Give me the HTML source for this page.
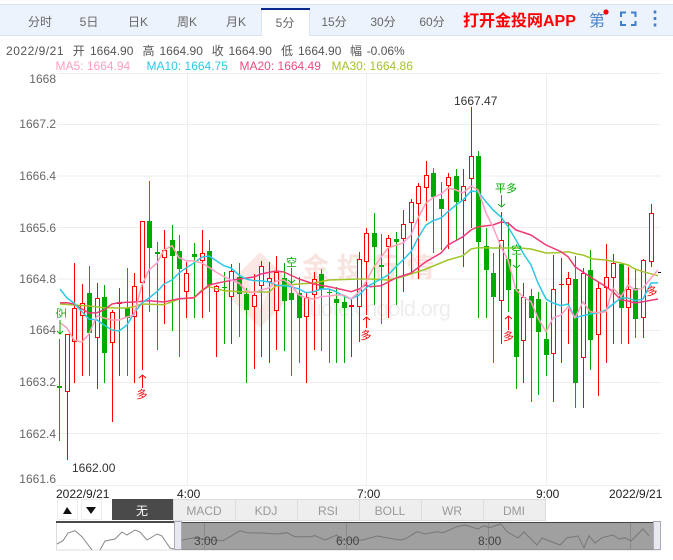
<!DOCTYPE html>
<html><head><meta charset="utf-8"><style>
html,body{margin:0;padding:0;background:#fff;width:673px;height:560px;overflow:hidden}
svg{display:block;font-family:"Liberation Sans","Noto Sans CJK SC",sans-serif}
</style></head><body>
<svg width="673" height="560" viewBox="0 0 673 560" xmlns="http://www.w3.org/2000/svg">
<!-- top bar -->
<rect x="0" y="4" width="673" height="32" fill="#edf3fc"/>
<path d="M0 4.5H673M0 35.5H673" stroke="#dbe4f3" fill="none"/>
<path d="M261.5 36V9H309.5V36" fill="#fff" stroke="#dbe4f3"/>
<rect x="261" y="8" width="49" height="2" fill="#0a2a8c"/>
<rect x="262" y="34" width="47" height="3" fill="#fff"/>
<g font-size="12" fill="#666" text-anchor="middle">
<text x="40" y="26">分时</text><text x="89" y="26">5日</text><text x="138" y="26">日K</text><text x="187" y="26">周K</text><text x="236" y="26">月K</text><text x="285" y="27">5分</text><text x="334" y="26">15分</text><text x="383" y="26">30分</text><text x="432" y="26">60分</text>
</g>
<text x="463" y="26" font-size="16" font-weight="bold" fill="#f00">打开金投网APP</text>
<text x="589" y="26" font-size="16" fill="#4a84cc">第</text>
<circle cx="606" cy="12" r="2.6" fill="#f00"/>
<path d="M626 12.500H621V17M631 12.500H635.500V17M621 21V25H626M635.500 21V25H631" fill="none" stroke="#3f7fcf" stroke-width="2"/>
<path d="M655 10.500V13.500M655 17V20M655 23.500V26.500" stroke="#3f7fcf" stroke-width="2.600" fill="none"/>
<!-- info rows -->
<g font-size="12" fill="#555">
<text x="6" y="55" textLength="57.500" lengthAdjust="spacing">2022/9/21</text>
<text x="72.700" y="55">开</text><text x="90" y="55">1664.90</text>
<text x="142.500" y="55">高</text><text x="159.500" y="55">1664.90</text>
<text x="211.700" y="55">收</text><text x="228.500" y="55">1664.90</text>
<text x="281" y="55">低</text><text x="298" y="55">1664.90</text>
<text x="350" y="55">幅</text><text x="366.700" y="55">-0.06%</text>
</g>
<g font-size="12">
<text x="55.500" y="70" fill="#ff9ec0">MA5: 1664.94</text>
<text x="146.500" y="70" fill="#2ec7e6">MA10: 1664.75</text>
<text x="239.500" y="70" fill="#ee4a85">MA20: 1664.49</text>
<text x="331.500" y="70" fill="#a3c429">MA30: 1664.86</text>
</g>
<!-- grid -->
<path d="M57 73.500H661M57 124.500H661M57 176H661M57 227.500H661M57 279H661M57 330.500H661M57 382.500H661M57 433.500H661M57 485.500H661M187.500 73V485M366.500 73V485M546.500 73V485" stroke="#eee" fill="none"/>
<!-- axis -->
<g font-size="12" fill="#666" text-anchor="end">
<text x="56" y="83">1668</text><text x="56" y="128">1667.2</text><text x="56" y="180">1666.4</text><text x="56" y="232">1665.6</text><text x="56" y="283">1664.8</text><text x="56" y="334">1664</text><text x="56" y="386">1663.2</text><text x="56" y="438">1662.4</text><text x="56" y="483">1661.6</text>
</g>
<g font-size="12" fill="#222">
<text x="56" y="498">2022/9/21</text><text x="177" y="498">4:00</text><text x="357" y="498">7:00</text><text x="536" y="498">9:00</text><text x="609" y="498">2022/9/21</text>
</g>
<!-- watermark -->
<path d="M260 252L298 290L260 328L222 290Z" fill="#f9e8e4"/>
<path d="M260 270L272 282L260 310L248 282Z" fill="#fff" opacity=".7"/>
<text x="302" y="277" font-size="27" fill="#f9e3de" font-weight="bold" letter-spacing="8">金投行情</text>
<text x="298" y="316" font-size="22" fill="#eee" textLength="153">quote.cngold.org</text>
<!-- wicks -->
<path stroke="#f00" fill="none" d="M67.500 334V460M74.500 263V383M82.500 284V376M97.500 283V389M112.500 310V422M119.500 288V376M134.500 273V383M142.500 221V370M164.500 230V324M186.500 262V318M202.500 230V318M216.500 285V357M231.500 264V344M254.500 274V369M261.500 261V357M269.500 262V363M276.500 256V350M306.500 293V383M314.500 272V350M351.500 298V357M359.500 252V342M366.500 228V315M388.500 235V318M403.500 210V292M411.500 199V273M418.500 183V279M426.500 161V221M448.500 173V249M463.500 169V267M471.500 107V228M501.500 212V344M523.500 283V383M553.500 255V402M561.500 258V363M568.500 272V344M583.500 268V408M598.500 282V396M606.500 244V363M613.500 254V344M628.500 267V344M643.500 259V338M651.500 204V267"/>
<path stroke="#0a0" fill="none" d="M59.500 339V441M89.500 266V376M104.500 285V383M127.500 268V376M149.500 181V312M157.500 242V350M172.500 225V331M179.500 235V357M194.500 243V318M209.500 240V312M224.500 272V344M239.500 263V337M246.500 288V383M284.500 263V351M291.500 268V376M299.500 277V363M321.500 269V351M329.500 290V363M336.500 287V363M344.500 295V363M374.500 213V305M381.500 234V324M396.500 232V305M433.500 168V253M441.500 182V250M456.500 169V240M478.500 151V318M486.500 228V318M493.500 253V363M508.500 222V312M516.500 268V389M531.500 289V402M538.500 292V395M546.500 302V376M575.500 256V408M590.500 250V370M621.500 264V344M635.500 269V338"/>
<!-- green bodies -->
<path fill="#0a0" d="M57 386h5v2h-5zM87 293h5v40h-5zM102 297h5v56h-5zM125 308h5v10h-5zM147 221h5v27h-5zM155 252h5v2h-5zM170 240h5v16h-5zM177 251h5v18h-5zM192 254h5v3h-5zM207 251h5v34h-5zM222 287h5v1h-5zM237 277h5v17h-5zM244 294h5v16h-5zM282 278h5v23h-5zM289 293h5v7h-5zM297 293h5v25h-5zM319 274h5v15h-5zM327 292h5v1h-5zM334 299h5v4h-5zM342 302h5v6h-5zM372 233h5v14h-5zM379 265h5v2h-5zM394 239h5v3h-5zM431 173h5v24h-5zM439 199h5v10h-5zM454 176h5v26h-5zM476 156h5v86h-5zM484 246h5v24h-5zM491 273h5v24h-5zM506 259h5v31h-5zM514 289h5v68h-5zM529 296h5v22h-5zM536 299h5v33h-5zM544 339h5v16h-5zM573 279h5v104h-5zM588 270h5v70h-5zM619 264h5v44h-5zM633 288h5v31h-5z"/>
<!-- red bodies -->
<path fill="#fff" stroke="#f00" d="M65.500 334.500h4v57h-4zM72.500 308.500h4v33h-4zM80.500 303.500h4v12h-4zM95.500 298.500h4v39h-4zM110.500 312.500h4v30h-4zM132.500 286.500h4v30h-4zM140.500 221.500h4v61h-4zM162.500 250.500h4v7h-4zM184.500 273.500h4v18h-4zM200.500 253.500h4v7h-4zM214.500 286.500h4v5h-4zM229.500 271.500h4v25h-4zM252.500 295.500h4v11h-4zM259.500 266.500h4v19h-4zM267.500 278.500h4v3h-4zM274.500 272.500h4v38h-4zM304.500 297.500h4v19h-4zM312.500 279.500h4v15h-4zM357.500 259.500h4v47h-4zM364.500 233.500h4v28h-4zM386.500 238.500h4v8h-4zM401.500 224.500h4v14h-4zM409.500 202.500h4v20h-4zM416.500 186.500h4v17h-4zM424.500 175.500h4v12h-4zM446.500 177.500h4v8h-4zM461.500 186.500h4v14h-4zM469.500 156.500h4v22h-4zM499.500 240.500h4v60h-4zM521.500 297.500h4v43h-4zM551.500 289.500h4v64h-4zM566.500 278.500h4v6h-4zM581.500 273.500h4v84h-4zM596.500 288.500h4v46h-4zM604.500 277.500h4v10h-4zM611.500 263.500h4v14h-4zM626.500 289.500h4v18h-4zM641.500 260.500h4v57h-4zM649.500 213.500h4v48h-4z"/>
<path fill="#f00" d="M117 302h5v2h-5zM349 305h5v2h-5zM559 284h5v1h-5z"/>
<!-- MA lines -->
<g fill="none" stroke-width="1.500" stroke-linejoin="round">
<path stroke="#a3c429" d="M60 304L74 305L89 306L104 307.700L119 308L127 308L134 306.700L142 304L164 304.700L179 299L194 297.700L202 290L209 286.700L224 290.700L246 292L269 292L276 286L299 284L314 283L329 280L359 279L370 279L388 280L403 276.700L426 269L448 260L463 255.700L471 249L478 247.700L493 248L520 248L531 249L546 253L558 252.700L568 251.700L577 254L583 255L593 259L606 260L621 263L628 265L635 269L643 271.700L658 275.700"/>
<path stroke="#ee3a78" d="M60 302.700L67 302.700L74 304L82 309L89 313L97 312.700L104 310L112 304L119 302.700L134 302L149 300.700L164 302L179 298.700L194 297.700L209 285L224 281.700L239 279L254 277L261 274L276 271L284 272L299 279L314 284L329 286.700L344 290L351 291.700L359 289L366 285L370 286.700L381 285.700L396 278L411 273L426 261.700L441 253L448 245L463 236.700L471 230L478 226.700L493 225L501 222L508 223L516 230L531 235L546 245L561 251.700L568 256.700L575 266.700L590 276.700L606 286.700L613 291.700L621 300L628 301L635 303L643 301.700L658 299"/>
<path stroke="#2ec7e6" d="M60 289L67 298L74 303L82 311.700L89 319L97 320L104 325L112 330L119 331L127 325L134 313L142 303L149 298L157 291.700L164 284L172 280L179 273L186 268L194 263L202 257L209 256L224 265.700L231 268L239 275L246 279L254 280.700L261 280.700L269 282L276 285L284 285.700L291 286.700L299 289L306 292.700L314 291.700L321 289L329 289L336 291.700L344 296L351 299L359 295L366 288L370 285L388 275L396 266.700L403 260L411 251.700L418 238L426 225L433 220.700L441 218L448 211.700L456 205L463 200L471 191L478 191.700L486 201.700L493 210L501 217L508 226.700L516 240L523 253L531 265L538 283L546 299L553 303L561 305.700L568 304L575 317.700L583 315.700L590 314L598 313L606 310L613 304L621 298L628 298L635 300.700L643 299L651 283L658 282.700"/>
<path stroke="#ffa0c0" d="M60 322.700L67 328L74 340L82 342L89 334L97 315.700L104 318L112 320L119 320L127 317L134 315L142 285L149 270L157 263L164 250L172 245.700L179 257.700L186 260.700L194 261L202 263L210 268L216 272L224 276.700L231 280L239 283L246 291L254 292.700L261 290L269 288L276 281L284 280L291 285L299 295L306 298L314 299L321 296.700L329 296L336 295L344 295L351 299L359 292L366 281.700L374 266.700L388 248L403 243L411 235L418 218L426 203L433 197.700L441 194L448 188L456 190L463 193L471 186L478 190L486 213L493 227L501 246.700L508 260L516 290L523 296.700L531 301.700L538 318L546 331.700L553 318L561 315L568 306.700L575 318L583 301.700L590 311.700L598 312.700L606 311.700L613 288L621 296.700L628 285L635 290L643 288L651 278L658 270"/>
</g>
<path d="M658 272.500H661" stroke="#111"/>
<!-- annotations -->
<text x="454" y="105" font-size="12" fill="#333">1667.47</text>
<text x="72" y="472" font-size="12" fill="#333">1662.00</text>
<!-- trade marks -->
<g font-size="11" fill="#0a0" text-anchor="middle">
<text transform="translate(65 313) rotate(-90)" x="0" y="0">空</text>
<text x="291.500" y="266">空</text>
<text x="506" y="192">平多</text>
<text x="516.500" y="253.500">空</text>
</g>
<path fill="none" stroke="#0a0" d="M60 320V334M57 331L60 334L63 331M291.500 268V283M288 280L291.500 283L295 280M501.500 195V207M498 204L501.500 207L505 204M516.500 255V268M513 265L516.500 268L520 265"/>
<g font-size="11" fill="#f00" text-anchor="middle">
<text x="142" y="398">多</text>
<text x="366" y="339">多</text>
<text x="508.500" y="340">多</text>
<text x="652" y="295">多</text>
</g>
<path fill="none" stroke="#f00" d="M142.500 375V388M139 378L142.500 375L146 378M366.500 317V328M363 320L366.500 317L370 320M508.500 316V330M505 319L508.500 316L512 319"/>
<!-- indicator buttons -->
<rect x="57.500" y="499.500" width="20" height="20" fill="#fff" stroke="#eee"/>
<rect x="81.500" y="499.500" width="20" height="20" fill="#fff" stroke="#eee"/>
<path d="M63 514L67 507L72 514Z" fill="#111"/>
<path d="M86 507H96L91 514Z" fill="#111"/>
<rect x="112" y="499" width="61" height="21" fill="#4a4a4a"/>
<text x="142" y="515" font-size="12" fill="#fff" text-anchor="middle">无</text>
<rect x="173.500" y="499.500" width="372" height="21" fill="#eee" stroke="#ddd"/>
<path d="M235.500 500V520M297.500 500V520M359.500 500V520M421.500 500V520M483.500 500V520" stroke="#ddd" fill="none"/>
<g font-size="12" fill="#999" text-anchor="middle">
<text x="204" y="515">MACD</text><text x="266" y="515">KDJ</text><text x="328" y="515">RSI</text><text x="390" y="515">BOLL</text><text x="452" y="515">WR</text><text x="514" y="515">DMI</text>
</g>
<!-- navigator -->
<rect x="56" y="521" width="118" height="2" fill="#4a4a4a"/>
<rect x="181" y="522" width="472" height="28" fill="#a0a0a0"/>
<path d="M181 522.500H653M181 549.500H653" stroke="#444" fill="none"/>
<path d="M204.500 523V549M346.500 523V549M488.500 523V549M630.500 523V549" stroke="#8a8a8a" fill="none"/>
<path d="M56.500 523V550H661" stroke="#ddd" fill="none"/>
<path fill="none" stroke="#888" d="M57 544L63 540.700L68 533L75 530.700L82 536.700L92 550M100 550L105 541L115 539L122 532L127 535L135 530L140 532L147 540L157 534L162 536L170 548L174 549"/>
<path fill="none" stroke="#777" d="M182 540L193 538L213 540L223 540.700L230 536.700L240 530.700L247 532.700L263 533L277 534L287 532.700L295 536.700L310 536.700L315 535.700L325 540L337 535L340 540L363 540L377 536L400 540L405 539L417 531.700L425 534L437 531.700L443 532.700L457 526.700L465 525L478 529L484 525.700L489 527.700L501 524L507 531.700L518 538L524 532L537 545L542 538L560 545L567 537.700L578 536L584 547.700L589 535.700L595 543L602 537.700L613 535L619 539L625 537.700L631 541L643 529L649 535.700"/>
<g font-size="12" fill="#444">
<text x="194" y="545">3:00</text><text x="336" y="545">6:00</text><text x="478" y="545">8:00</text>
</g>
<rect x="174.500" y="521.500" width="7" height="28" fill="#e8e8f0" stroke="#aab"/>
<rect x="653.500" y="521.500" width="7" height="28" fill="#e8e8f0" stroke="#aab"/>
</svg>
</body></html>
